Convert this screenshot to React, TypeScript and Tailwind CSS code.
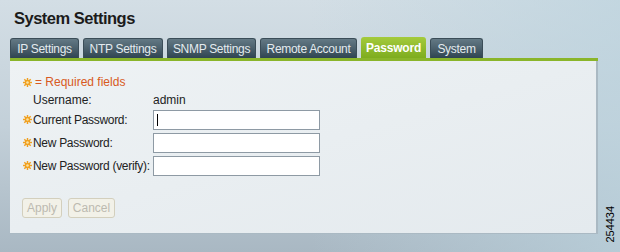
const tabs: [string, number][] = [
  ["IP Settings", 69],
  ["NTP Settings", 80],
  ["SNMP Settings", 89],
  ["Remote Account", 97],
  ["Password", 65],
  ["System", 53],
];

function Star() {
  return (
    <svg width="9" height="9" viewBox="0 0 10 10" className="shrink-0">
      <g fill="#f0a020">
        <circle cx="5" cy="5" r="3" />
        <rect x="4.2" y="0" width="1.6" height="10" />
        <rect x="0" y="4.2" width="10" height="1.6" />
        <rect x="4.2" y="0" width="1.6" height="10" transform="rotate(45 5 5)" />
        <rect x="4.2" y="0" width="1.6" height="10" transform="rotate(-45 5 5)" />
      </g>
      <circle cx="5" cy="5" r="1.4" fill="#fbe2a0" />
    </svg>
  );
}

function Row({ label, focused }: { label: string; focused?: boolean }) {
  return (
    <div className="flex items-center h-[23px]">
      <div className="w-[11px] flex items-center pl-[1px]">
        <Star />
      </div>
      <div className="w-[120px] text-[12px] text-[#222] whitespace-nowrap tracking-[-0.3px]">{label}</div>
      <div className="w-[167px] h-[20px] border border-[#8e9aa4] bg-white flex items-center pl-[3px]">
        {focused && <div className="w-[1px] h-[12px] bg-black" />}
      </div>
    </div>
  );
}

export default function App() {
  return (
    <div
      className="w-[620px] h-[252px] relative overflow-hidden bg-gradient-to-b from-[#d3dee5] via-[#c3d0d9] to-[#a9b8c3] pt-[8px]"
      style={{ fontFamily: '"Liberation Sans", Arial, sans-serif' }}
    >
      <div className="absolute inset-0 bg-gradient-to-r from-transparent via-transparent to-[#bcd3de] opacity-70" />
      <div className="relative">
        <h1 className="ml-[14px] text-[16.5px] font-bold text-[#1b1b1b] leading-[20px] tracking-[-0.5px]">System Settings</h1>
        <div className="flex gap-[4px] ml-[10px] mt-[10px] h-[20px] items-end">
          {tabs.map(([t, w]) =>
            t === "Password" ? (
              <div
                key={t}
                style={{ width: w }}
                className="h-[21px] flex items-center justify-center rounded-t-[3px] bg-gradient-to-b from-[#a4cb3c] to-[#7eac1e] text-white font-bold text-[12px] tracking-[-0.2px]"
              >
                {t}
              </div>
            ) : (
              <div
                key={t}
                style={{ width: w }}
                className="h-[20px] flex items-center justify-center rounded-t-[3px] border border-b-0 border-[#3b4d58] bg-gradient-to-b from-[#637985] via-[#4b606c] to-[#2f4451] text-[#e4ebef] text-[12px] tracking-[-0.3px] whitespace-nowrap"
              >
                {t}
              </div>
            )
          )}
        </div>
        <div className="ml-[10px] w-[588px] h-[3px] bg-[#8ab52a]" />
        <div className="ml-[10px] w-[588px] h-[173px] bg-gradient-to-br from-[#eef2f4] to-[#e4eaee] border-r-2 border-b border-[#aab9c3] pl-[12px] pt-[12px]">
          <div className="flex items-center h-[18px] text-[12px] text-[#d85a22]">
            <div className="w-[13px] flex items-center pl-[1px]">
              <Star />
            </div>
            <span>= Required fields</span>
          </div>
          <div className="flex items-center h-[17px] text-[12px] text-[#222]">
            <div className="w-[11px]" />
            <div className="w-[120px]">Username:</div>
            <div>admin</div>
          </div>
          <Row label="Current Password:" focused />
          <Row label="New Password:" />
          <Row label="New Password (verify):" />
          <div className="flex gap-[6px] mt-[21px]">
            <div className="h-[20px] w-[40px] border border-[#d3cfbd] rounded-[3px] bg-[#f2f1e8] text-[#bcbab0] text-[12px] flex items-center justify-center">
              Apply
            </div>
            <div className="h-[20px] w-[47px] border border-[#d3cfbd] rounded-[3px] bg-[#f2f1e8] text-[#bcbab0] text-[12px] flex items-center justify-center">
              Cancel
            </div>
          </div>
        </div>
      </div>
      <div className="absolute right-[4px] bottom-[2px] w-[12px] h-[52px] flex items-center justify-center">
        <span className="-rotate-90 text-[11px] text-black whitespace-nowrap">254434</span>
      </div>
    </div>
  );
}
